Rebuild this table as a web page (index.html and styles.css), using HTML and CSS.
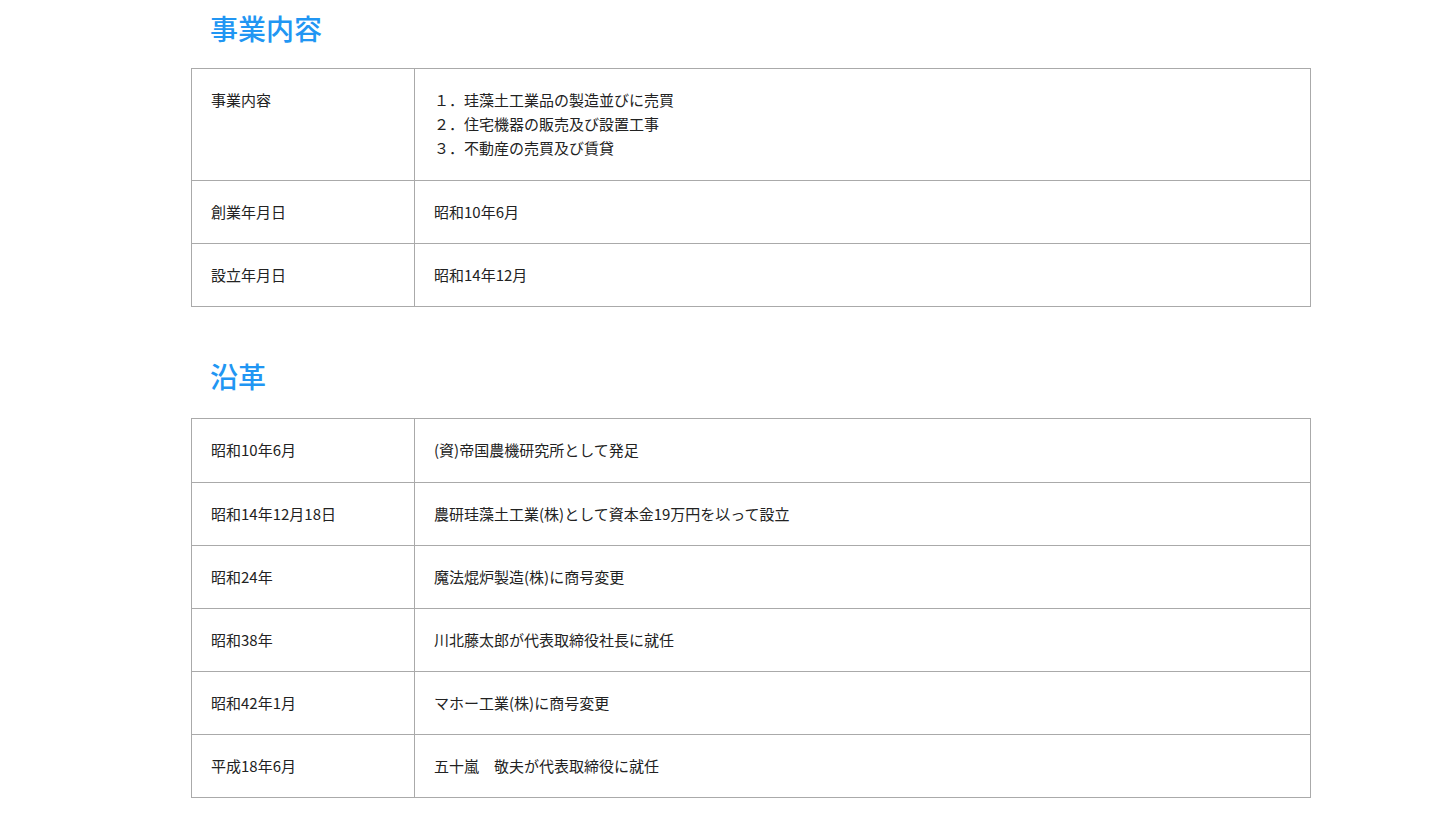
FILE: index.html
```html
<!DOCTYPE html>
<html lang="ja">
<head>
<meta charset="utf-8">
<title>会社概要</title>
<link rel="stylesheet" href="styles.css">
</head>
<body>
<main class="page">
  <section class="block">
    <h2 class="heading">事業内容</h2>
    <table class="info">
      <tbody>
        <tr>
          <th>事業内容</th>
          <td>１．珪藻土工業品の製造並びに売買<br>２．住宅機器の販売及び設置工事<br>３．不動産の売買及び賃貸</td>
        </tr>
        <tr>
          <th>創業年月日</th>
          <td>昭和10年6月</td>
        </tr>
        <tr>
          <th>設立年月日</th>
          <td>昭和14年12月</td>
        </tr>
      </tbody>
    </table>
  </section>
  <section class="block second">
    <h2 class="heading">沿革</h2>
    <table class="info">
      <tbody>
        <tr><th>昭和10年6月</th><td>(資)帝国農機研究所として発足</td></tr>
        <tr><th>昭和14年12月18日</th><td>農研珪藻土工業(株)として資本金19万円を以って設立</td></tr>
        <tr><th>昭和24年</th><td>魔法焜炉製造(株)に商号変更</td></tr>
        <tr><th>昭和38年</th><td>川北藤太郎が代表取締役社長に就任</td></tr>
        <tr><th>昭和42年1月</th><td>マホー工業(株)に商号変更</td></tr>
        <tr><th>平成18年6月</th><td>五十嵐　敬夫が代表取締役に就任</td></tr>
      </tbody>
    </table>
  </section>
</main>
</body>
</html>
```

FILE: styles.css
```css
html, body {
  margin: 0;
  padding: 0;
  background: #ffffff;
}

body {
  font-family: "Noto Sans CJK JP", "Noto Sans", sans-serif;
  color: #222222;
}

.page {
  width: 1120px;
  margin-left: 191px;
}

.block {
  display: flex;
  flex-direction: column;
}

.second {
  margin-top: 43px;
}

.heading {
  margin: 0;
  padding: 8px 0 0 19px;
  height: 68px;
  box-sizing: border-box;
  font-size: 28px;
  font-weight: 500;
  line-height: 40px;
  color: #2196f3;
}

.second .heading {
  padding-top: 6px;
}

.info {
  width: 100%;
  border-collapse: collapse;
  font-size: 15px;
  line-height: 24px;
}

.info th,
.info td {
  border: 1px solid #aaaaaa;
  padding: 19px 19px;
  text-align: left;
  vertical-align: top;
  font-weight: normal;
}

.info th {
  width: 184px;
}

.info tr:first-child td {
  padding-bottom: 20px;
}
```
